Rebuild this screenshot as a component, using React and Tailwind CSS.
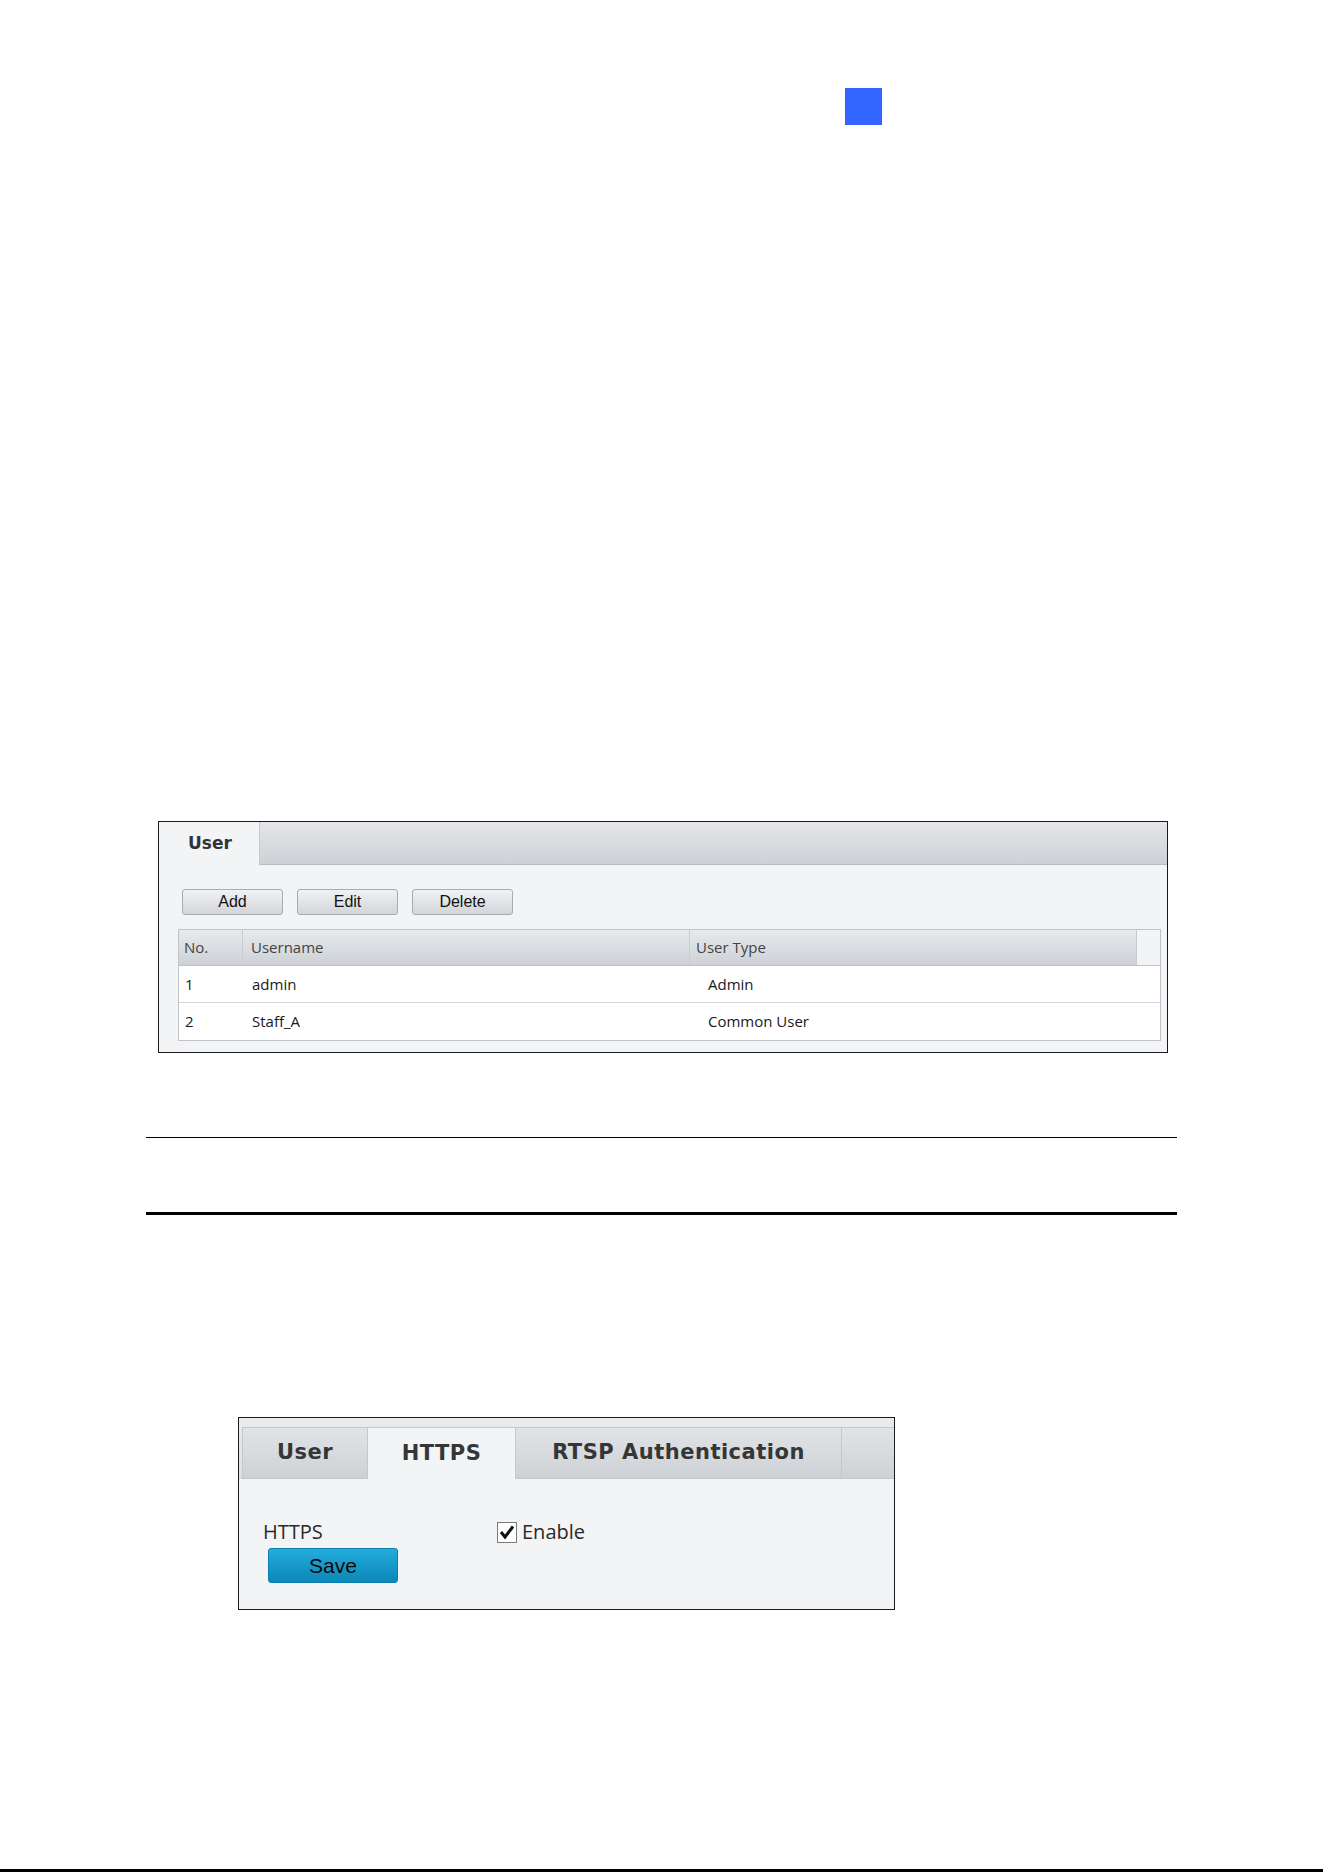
import { useState } from "react";

const USERS = [
  { no: 1, name: "admin", type: "Admin" },
  { no: 2, name: "Staff_A", type: "Common User" },
];

const tabFont = { fontFamily: '"DejaVu Sans", Verdana, sans-serif' };
const uiFont = { fontFamily: '"Open Sans", "Noto Sans", sans-serif' };
const btnFont = { fontFamily: '"Liberation Sans", Arial, sans-serif' };

function GrayButton({ children }) {
  return (
    <button
      className="w-[101px] h-[26px] rounded-[3px] border border-[#a8acb1] bg-gradient-to-b from-[#f1f2f4] to-[#d2d5d9] text-[16px] text-[#111] leading-none"
      style={btnFont}
    >
      {children}
    </button>
  );
}

function UserPanel() {
  return (
    <div className="ml-[158px] mt-[696px] w-[1010px] h-[232px] border border-[#1a1a1a] bg-[#f3f4f6] flex flex-col">
      <div className="flex h-[43px] pl-px">
        <div
          className="w-[100px] bg-[#f3f4f6] border-r border-[#c6cacf] pl-[28px] pt-[9px] text-[17px] font-bold text-[#333]"
          style={tabFont}
        >
          User
        </div>
        <div className="flex-1 bg-gradient-to-b from-[#e4e6e9] to-[#cdd1d5] border-b border-[#b9bdc2]" />
      </div>

      <div className="flex gap-[14px] pl-[23px] pt-[24px]">
        <GrayButton>Add</GrayButton>
        <GrayButton>Edit</GrayButton>
        <GrayButton>Delete</GrayButton>
      </div>

      <div className="ml-[19px] mt-[14px] w-[983px] border border-[#bfc3c8]" style={uiFont}>
        <div className="flex h-[36px] bg-gradient-to-b from-[#e8eaed] to-[#cdd1d5] text-[15px] text-[#444] border-b border-[#bfc3c8]">
          <div className="w-[64px] pl-[5px] flex items-center border-r border-[#c8ccd0]">No.</div>
          <div className="w-[447px] pl-[8px] flex items-center border-r border-[#c8ccd0]">Username</div>
          <div className="w-[447px] pl-[6px] flex items-center border-r border-[#c8ccd0]">User Type</div>
          <div className="flex-1 bg-[#f3f4f6]" />
        </div>
        {USERS.map((u, i) => (
          <div
            key={u.no}
            className={`flex h-[37px] bg-white text-[15px] text-[#1a1a1a] items-center ${i === 0 ? "border-b border-[#d3d6d9]" : ""}`}
          >
            <div className="w-[65px] pl-[6px]">{u.no}</div>
            <div className="w-[447px] pl-[8px]">{u.name}</div>
            <div className="pl-[17px]">{u.type}</div>
          </div>
        ))}
      </div>
    </div>
  );
}

function HttpsPanel() {
  const [enabled, setEnabled] = useState(true);
  const tabs = ["User", "HTTPS", "RTSP Authentication"];
  const widths = ["w-[125px]", "w-[148px]", "w-[326px]"];

  return (
    <div className="ml-[238px] mt-[202px] w-[657px] h-[193px] border border-[#1a1a1a] bg-[#f3f4f6] flex flex-col">
      <div className="flex h-[61px] pt-[9px] pl-[3px] bg-gradient-to-b from-[#e9ebed] to-[#dde0e3]">
        {tabs.map((t, i) => (
          <div
            key={t}
            className={`${widths[i]} flex items-center justify-center border-t border-l border-[#c4c8cc] text-[21px] font-bold text-[#363636] tracking-[0.5px] ${
              t === "HTTPS"
                ? "bg-[#f3f4f6]"
                : "bg-gradient-to-b from-[#e1e4e7] to-[#cdd1d5] border-b"
            }`}
            style={tabFont}
          >
            {t}
          </div>
        ))}
        <div className="flex-1 border-t border-l border-b border-[#c4c8cc] bg-gradient-to-b from-[#e1e4e7] to-[#cdd1d5]" />
      </div>

      <div className="pl-[24px] pt-[41px] flex flex-col" style={uiFont}>
        <div className="flex items-center h-[24px]">
          <span className="w-[234px] text-[20px] text-[#2a2a2a]">HTTPS</span>
          <label className="flex items-center gap-[5px] text-[20px] text-[#2a2a2a]">
            <span
              className="w-[20px] h-[21px] border border-[#7a7a7a] bg-white flex items-center justify-center"
              onClick={() => setEnabled(!enabled)}
            >
              {enabled && (
                <svg width="16" height="16" viewBox="0 0 16 16">
                  <path d="M2 8 L6 13 L14 2.5" fill="none" stroke="#111" strokeWidth="3" />
                </svg>
              )}
            </span>
            Enable
          </label>
        </div>
        <button
          className="ml-[5px] mt-[4px] w-[130px] h-[35px] rounded-[3px] border border-[#0b7fae] bg-gradient-to-b from-[#22acdd] to-[#0b88b8] text-[21px] text-[#0a0a0a] leading-none"
          style={btnFont}
        >
          Save
        </button>
      </div>
    </div>
  );
}

export default function App() {
  return (
    <div className="w-[1323px] h-[1872px] bg-white flex flex-col">
      <div className="ml-[845px] mt-[88px] w-[37px] h-[37px] bg-[#3366ff]" />
      <UserPanel />
      <div className="ml-[146px] mt-[84px] w-[1031px] h-px bg-black" />
      <div className="ml-[146px] mt-[74px] w-[1031px] h-[3px] bg-black" />
      <HttpsPanel />
      <div className="mt-auto w-full h-[3px] bg-black" />
    </div>
  );
}
